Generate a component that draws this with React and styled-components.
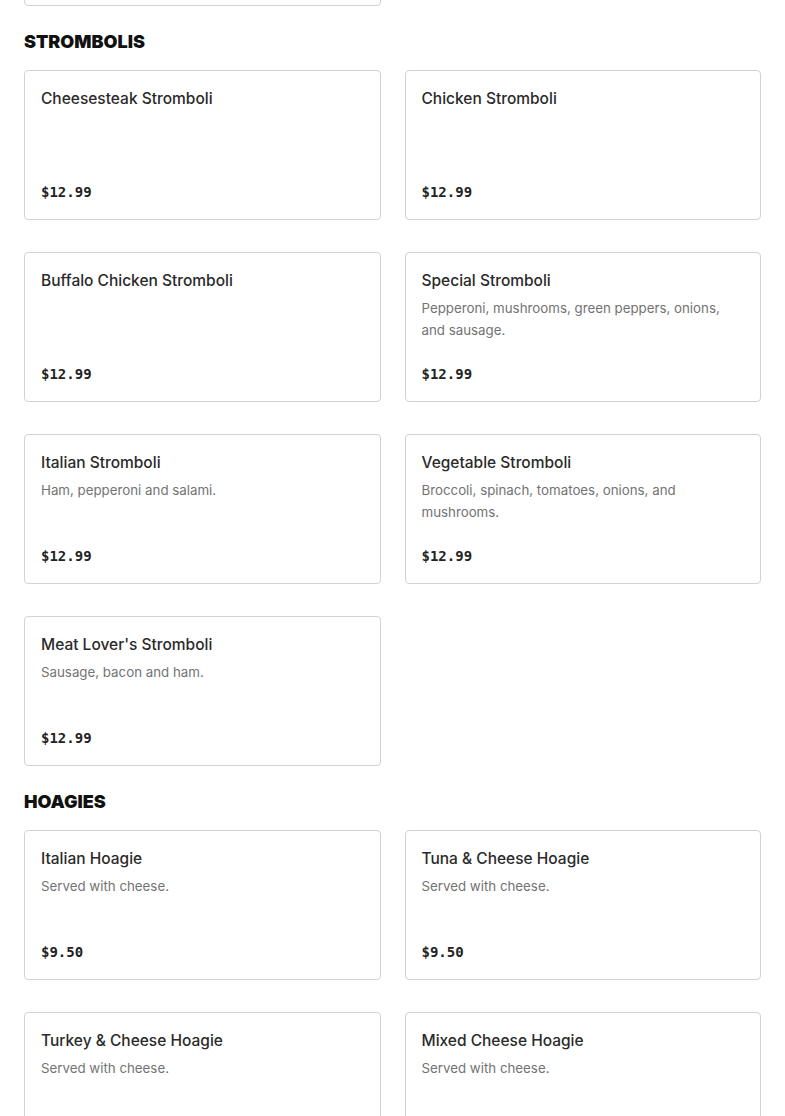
import styled, { createGlobalStyle } from 'styled-components';

const GlobalStyle = createGlobalStyle`
    body {
        margin: 0;
        background: #ffffff;
        font-family: Inter, "Liberation Sans", sans-serif;
    }
`;

const menu = [
    {
        title: 'Pizza',
        items: [
            { name: 'Grandma Pizza', desc: '', price: '$14.99' },
        ],
    },
    {
        title: 'Strombolis',
        items: [
            { name: 'Cheesesteak Stromboli', desc: '', price: '$12.99' },
            { name: 'Chicken Stromboli', desc: '', price: '$12.99' },
            { name: 'Buffalo Chicken Stromboli', desc: '', price: '$12.99' },
            { name: 'Special Stromboli', desc: 'Pepperoni, mushrooms, green peppers, onions, and sausage.', price: '$12.99' },
            { name: 'Italian Stromboli', desc: 'Ham, pepperoni and salami.', price: '$12.99' },
            { name: 'Vegetable Stromboli', desc: 'Broccoli, spinach, tomatoes, onions, and mushrooms.', price: '$12.99' },
            { name: "Meat Lover's Stromboli", desc: 'Sausage, bacon and ham.', price: '$12.99' },
        ],
    },
    {
        title: 'Hoagies',
        items: [
            { name: 'Italian Hoagie', desc: 'Served with cheese.', price: '$9.50' },
            { name: 'Tuna & Cheese Hoagie', desc: 'Served with cheese.', price: '$9.50' },
            { name: 'Turkey & Cheese Hoagie', desc: 'Served with cheese.', price: '$9.50' },
            { name: 'Mixed Cheese Hoagie', desc: 'Served with cheese.', price: '$9.50' },
        ],
    },
];

export default function App() {
    return (
        <>
            <GlobalStyle />
            <Page>
                {menu.map(({ title, items }, i) => (
                    <Section key={title} $first={i === 0}>
                        {i > 0 && <SectionTitle>{title}</SectionTitle>}
                        <Grid>
                            {items.map(({ name, desc, price }) => (
                                <Card key={name}>
                                    {i > 0 && (
                                        <>
                                            <ItemName>{name}</ItemName>
                                            {desc && <ItemDesc>{desc}</ItemDesc>}
                                            <Price>{price}</Price>
                                        </>
                                    )}
                                </Card>
                            ))}
                        </Grid>
                    </Section>
                ))}
            </Page>
        </>
    );
}

const Page = styled.main`
    padding: 0 24px 40px;
    margin-top: -144px;
    overflow: hidden;
`;

const Section = styled.section`
    margin-top: ${({ $first }) => ($first ? '0' : '24px')};
`;

const SectionTitle = styled.h2`
    margin: 0 0 16px;
    font-family: Inter, "Liberation Sans", sans-serif;
    font-weight: 900;
    font-size: 18px;
    line-height: 24px;
    text-transform: uppercase;
    color: #111111;
`;

const Grid = styled.div`
    display: grid;
    grid-template-columns: 1fr 1fr;
    gap: 32px 24px;
`;

const Card = styled.div`
    height: 150px;
    box-sizing: border-box;
    border: 1px solid #d2d2d2;
    border-radius: 4px;
    padding: 16px 16px 17px;
    display: flex;
    flex-direction: column;
`;

const ItemName = styled.div`
    font-family: Inter, "Liberation Sans", sans-serif;
    font-weight: 500;
    font-size: 15.5px;
    line-height: 24px;
    color: #2a2a2a;
`;

const ItemDesc = styled.p`
    margin: 4px 0 0;
    font-family: Inter, "Liberation Sans", sans-serif;
    font-size: 13.3px;
    line-height: 22px;
    color: #737373;
`;

const Price = styled.div`
    margin-top: auto;
    font-family: "DejaVu Sans Mono", "Liberation Mono", monospace;
    font-weight: 700;
    font-size: 14px;
    line-height: 20px;
    color: #222222;
`;
